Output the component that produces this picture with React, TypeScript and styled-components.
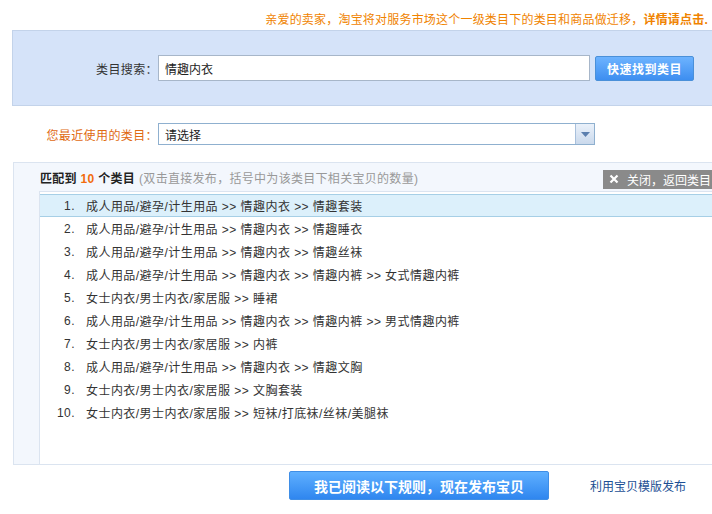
import React from "react"
import styled, { createGlobalStyle } from "styled-components"

const GlobalStyle = createGlobalStyle`
  html, body {
    margin: 0;
    padding: 0;
    background: #fff;
    font-family: "Liberation Sans", "Noto Sans CJK SC", sans-serif;
    font-size: 12px;
    color: #333;
  }
`

const categories = [
  "成人用品/避孕/计生用品 >> 情趣内衣 >> 情趣套装",
  "成人用品/避孕/计生用品 >> 情趣内衣 >> 情趣睡衣",
  "成人用品/避孕/计生用品 >> 情趣内衣 >> 情趣丝袜",
  "成人用品/避孕/计生用品 >> 情趣内衣 >> 情趣内裤 >> 女式情趣内裤",
  "女士内衣/男士内衣/家居服 >> 睡裙",
  "成人用品/避孕/计生用品 >> 情趣内衣 >> 情趣内裤 >> 男式情趣内裤",
  "女士内衣/男士内衣/家居服 >> 内裤",
  "成人用品/避孕/计生用品 >> 情趣内衣 >> 情趣文胸",
  "女士内衣/男士内衣/家居服 >> 文胸套装",
  "女士内衣/男士内衣/家居服 >> 短袜/打底袜/丝袜/美腿袜",
]

export default function App() {
  return (
    <Page>
      <GlobalStyle />
      <Notice>
        亲爱的卖家，淘宝将对服务市场这个一级类目下的类目和商品做迁移，<strong>详情请点击.</strong>
      </Notice>
      <SearchPanel>
        <FieldLabel>类目搜索：</FieldLabel>
        <SearchInput defaultValue="情趣内衣" />
        <QuickButton>快速找到类目</QuickButton>
      </SearchPanel>
      <RecentRow>
        <FieldLabel $accent>您最近使用的类目：</FieldLabel>
        <Select>
          <span>请选择</span>
          <SelectArrow>
            <svg width="9" height="5" viewBox="0 0 9 5">
              <path d="M0 0h9L4.5 5z" fill="#5b7fae" />
            </svg>
          </SelectArrow>
        </Select>
      </RecentRow>
      <ResultPanel>
        <ResultHead>
          <HeadTitle>
            匹配到 <Count>10</Count> 个类目
          </HeadTitle>
          <HeadHint>(双击直接发布，括号中为该类目下相关宝贝的数量)</HeadHint>
          <CloseButton>
            <svg width="10" height="10" viewBox="0 0 10 10">
              <path d="M1.5 1.5l7 7M8.5 1.5l-7 7" stroke="#fff" strokeWidth="2.2" />
            </svg>
            关闭，返回类目
          </CloseButton>
        </ResultHead>
        <ResultBody>
          <SideGutter />
          <List>
            {categories.map((c, i) => (
              <Item key={i} $active={i === 0}>
                <Num>{i + 1}.</Num>
                <span>{c}</span>
              </Item>
            ))}
          </List>
        </ResultBody>
      </ResultPanel>
      <Footer>
        <PublishButton>我已阅读以下规则，现在发布宝贝</PublishButton>
        <TemplateLink>利用宝贝模版发布</TemplateLink>
      </Footer>
    </Page>
  )
}

const Page = styled.div`
  width: 712px;
  height: 514px;
  overflow: hidden;
`

const Notice = styled.div`
  height: 30px;
  box-sizing: border-box;
  padding: 13px 4px 0 0;
  text-align: right;
  color: #f08300;
  font-size: 12px;
  line-height: 14px;
  letter-spacing: 0.2px;
  white-space: nowrap;

  strong {
    font-weight: bold;
  }
`

const SearchPanel = styled.div`
  margin-left: 12px;
  height: 76px;
  box-sizing: border-box;
  background: #d5e3f9;
  border: 1px solid #c3d3ea;
  border-right: none;
  display: flex;
  align-items: center;
`

const FieldLabel = styled.label<{ $accent?: boolean }>`
  width: 145px;
  flex-shrink: 0;
  text-align: right;
  color: ${(p) => (p.$accent ? "#e06a12" : "#333")};
  font-size: 12px;
  letter-spacing: 0.4px;
`

const SearchInput = styled.input`
  width: 432px;
  height: 26px;
  box-sizing: border-box;
  border: 1px solid #a7b6c9;
  padding: 0 6px;
  font-family: inherit;
  font-size: 12px;
  color: #222;
  outline: none;
`

const QuickButton = styled.button`
  margin-left: 5px;
  width: 99px;
  height: 25px;
  border: 1px solid #4a90d9;
  border-radius: 2px;
  background: linear-gradient(#6db3ff, #3d8ef0);
  color: #fff;
  font-family: inherit;
  font-size: 12px;
  font-weight: bold;
  letter-spacing: 0.5px;
  padding: 0;
`

const RecentRow = styled.div`
  display: flex;
  align-items: center;
  height: 56px;
  padding-left: 13px;
  box-sizing: border-box;
`

const Select = styled.div`
  width: 437px;
  height: 22px;
  box-sizing: border-box;
  border: 1px solid #8fb0cf;
  display: flex;
  align-items: center;
  justify-content: space-between;
  padding-left: 6px;
  color: #222;
`

const SelectArrow = styled.span`
  width: 18px;
  height: 20px;
  background: linear-gradient(#eaf1fa, #cad9ec);
  border-left: 1px solid #a8c0dc;
  display: flex;
  align-items: center;
  justify-content: center;
`

const ResultPanel = styled.div`
  margin-left: 13px;
  height: 303px;
  box-sizing: border-box;
  border: 1px solid #dbe4f0;
  border-right: none;
  background: #f3f7fd;
  display: flex;
  flex-direction: column;
`

const ResultHead = styled.div`
  height: 28px;
  display: flex;
  align-items: center;
  padding-left: 26px;
`

const HeadTitle = styled.span`
  font-weight: bold;
  color: #222;
  white-space: nowrap;
  letter-spacing: 0.3px;
`

const Count = styled.span`
  color: #f26c0d;
`

const HeadHint = styled.span`
  margin-left: 4px;
  color: #999;
  white-space: nowrap;
  letter-spacing: 0.3px;
`

const CloseButton = styled.span`
  margin-left: auto;
  margin-top: 4px;
  height: 19px;
  width: 109px;
  background: #8a8a8a;
  color: #fff;
  display: flex;
  align-items: center;
  gap: 8px;
  padding-left: 6px;
  box-sizing: border-box;
  white-space: nowrap;
`

const ResultBody = styled.div`
  flex: 1;
  display: flex;
`

const SideGutter = styled.div`
  width: 25px;
  flex-shrink: 0;
`

const List = styled.ol`
  flex: 1;
  margin: 0;
  padding: 2px 0 0;
  list-style: none;
  background: #fff;
  border-left: 1px solid #dbe4f0;
  border-top: 1px solid #dbe4f0;
`

const Item = styled.li<{ $active?: boolean }>`
  height: 23px;
  box-sizing: border-box;
  display: flex;
  align-items: center;
  color: #333;
  white-space: nowrap;
  letter-spacing: 0.45px;
  background: ${(p) => (p.$active ? "#dcf0fb" : "transparent")};
  border-top: 1px solid ${(p) => (p.$active ? "#a6cfe6" : "transparent")};
  border-bottom: 1px solid ${(p) => (p.$active ? "#a6cfe6" : "transparent")};
`

const Num = styled.span`
  width: 46px;
  text-align: right;
  padding-right: 11px;
  box-sizing: border-box;
  flex-shrink: 0;
`

const Footer = styled.div`
  display: flex;
  align-items: center;
  padding: 6px 0 0 289px;
`

const PublishButton = styled.button`
  width: 260px;
  height: 29px;
  border: 1px solid #3f8ee6;
  border-radius: 2px;
  background: linear-gradient(#5fb0ff, #2f86ef);
  color: #fff;
  font-family: inherit;
  font-size: 14px;
  font-weight: bold;
  padding: 0;
`

const TemplateLink = styled.a`
  margin-left: 41px;
  color: #1c4f94;
  font-size: 12px;
  white-space: nowrap;
  cursor: pointer;
`
